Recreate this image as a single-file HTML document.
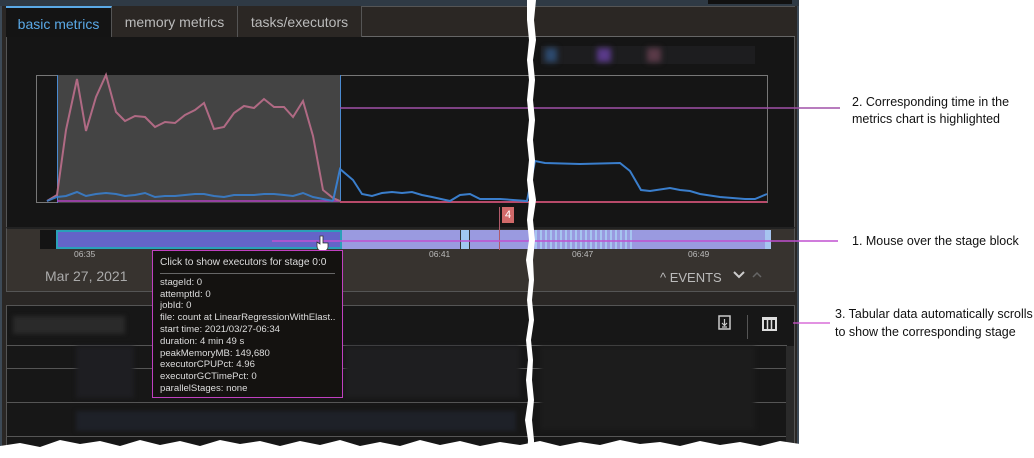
<!DOCTYPE html>
<html><head><meta charset="utf-8"><style>
*{margin:0;padding:0;box-sizing:border-box}
body{width:1034px;height:458px;background:#fff;position:relative;overflow:hidden;font-family:"Liberation Sans",Arial,sans-serif}
.a{position:absolute}
.tab{position:absolute;top:6px;height:31px;font-size:14px;color:#bbb;padding-top:8px;text-align:center;border-right:1px solid #555;background:#2b2724}
.tt{font-size:9.6px;color:#ddd;line-height:11.8px;white-space:nowrap;overflow:hidden}
.ann{font-size:12.5px;color:#111;line-height:17px}
</style></head><body>
<div class="a" style="left:0;top:0;width:799px;height:458px;background:#2a2725;border-left:2px solid #3d4a57;border-right:2px solid #3d4a57"></div>
<div class="a" style="left:0;top:0;width:799px;height:6px;background:#2f3a45"></div>
<div class="a" style="left:708px;top:0;width:84px;height:4px;background:#111"></div>
<div class="a" style="left:6px;top:6px;width:789px;height:31px;background:#2b2724;border-bottom:1px solid #666;border-top:1px solid #555"></div>
<div class="tab" style="left:6px;width:106px;background:#141414;color:#5aa9e6;border-top:2px solid #5aa9e6;border-bottom:1px solid #141414;height:32px">basic metrics</div>
<div class="tab" style="left:112px;width:126px">memory metrics</div>
<div class="tab" style="left:238px;width:124px">tasks/executors</div>
<div class="a" style="left:6px;top:37px;width:789px;height:190px;background:#151515;border-left:1px solid #555;border-right:1px solid #555"></div>
<div class="a" style="left:541px;top:46px;width:214px;height:18px;background:#1d1d1f"></div>
<div class="a" style="left:545px;top:48px;width:12px;height:14px;background:#2d4a6e;filter:blur(3px)"></div>
<div class="a" style="left:597px;top:48px;width:14px;height:14px;background:#5a3a8a;filter:blur(3px)"></div>
<div class="a" style="left:647px;top:48px;width:14px;height:14px;background:#5a3a48;filter:blur(3px)"></div>
<div class="a" style="left:36px;top:75px;width:732px;height:128px;border:1px solid #777"></div>
<div class="a" style="left:57px;top:75px;width:284px;height:128px;background:#444;border-left:1px solid #4a8ad0;border-right:1px solid #4a8ad0"></div>
<div class="a" style="left:6px;top:227px;width:789px;height:65px;background:#37332f;border:1px solid #555;border-top:2px solid #222"></div>
<div class="a" style="left:40px;top:230px;width:16px;height:19px;background:#141414"></div>
<div class="a" style="left:342px;top:230px;width:428px;height:19px;background:#9a9ae0"></div>
<div class="a" style="left:460px;top:230px;width:10px;height:19px;background:#a0c8f0;border-left:1px solid #333;border-right:1px solid #333"></div>
<div class="a" style="left:535px;top:230px;width:100px;height:19px;background:repeating-linear-gradient(90deg,#a6c4f0 0 2px,#9a9ae0 2px 5px)"></div>
<div class="a" style="left:765px;top:230px;width:6px;height:19px;background:#a6c4f0"></div>
<div class="a" style="left:56px;top:230px;width:286px;height:19px;background:#6464c8;border:2px solid #2aa0b8"></div>
<div class="a" style="left:502px;top:207px;width:12px;height:16px;background:#d06a6a;color:#fff;font-size:11px;text-align:center;line-height:16px">4</div>
<div class="a" style="left:499px;top:207px;width:1px;height:43px;background:#b05a6a"></div>
<div class="a" style="left:74px;top:249px;font-size:8.5px;color:#bbb">06:35</div>
<div class="a" style="left:429px;top:249px;font-size:8.5px;color:#bbb">06:41</div>
<div class="a" style="left:572px;top:249px;font-size:8.5px;color:#bbb">06:47</div>
<div class="a" style="left:688px;top:249px;font-size:8.5px;color:#bbb">06:49</div>
<div class="a" style="left:45px;top:268px;font-size:14px;color:#aaa">Mar 27, 2021</div>
<div class="a" style="left:660px;top:270px;font-size:13px;color:#bbb">^ EVENTS</div>
<svg class="a" style="left:733px;top:270px" width="30" height="10"><path d="M1,2 l5,5 l5,-5" fill="none" stroke="#ccc" stroke-width="2"/><path d="M20,7 l4,-4 l4,4" fill="none" stroke="#666" stroke-width="1.5"/></svg>
<div class="a" style="left:6px;top:305px;width:789px;height:153px;background:#171717;border:1px solid #555"></div>
<div class="a" style="left:13px;top:316px;width:112px;height:18px;background:#2a2a2a;filter:blur(2px)"></div>
<div class="a" style="left:7px;top:345px;width:780px;height:1px;background:#555"></div>
<div class="a" style="left:7px;top:368px;width:780px;height:1px;background:#555"></div>
<div class="a" style="left:7px;top:402px;width:780px;height:1px;background:#555"></div>
<div class="a" style="left:7px;top:436px;width:780px;height:1px;background:#555"></div>
<div class="a" style="left:786px;top:346px;width:8px;height:112px;background:#2a2a2a"></div>
<div class="a" style="left:76px;top:346px;width:58px;height:52px;background:#1e1e22;filter:blur(2px)"></div>
<div class="a" style="left:76px;top:411px;width:440px;height:20px;background:#1e2128;filter:blur(2px)"></div>
<div class="a" style="left:345px;top:346px;width:175px;height:52px;background:#1e1e20;filter:blur(2px)"></div>
<div class="a" style="left:540px;top:346px;width:215px;height:84px;background:#1c1c1c;filter:blur(2px)"></div>
<svg class="a" style="left:718px;top:315px" width="60" height="18"><rect x="1" y="1" width="11" height="13" fill="none" stroke="#ccc" stroke-width="1.5"/><path d="M6.5,4 v6 M4,8 l2.5,2.5 l2.5,-2.5 M4,12 h5" stroke="#ccc" fill="none" stroke-width="1.2"/><rect x="45" y="3" width="13" height="12" fill="none" stroke="#ddd" stroke-width="2"/><path d="M49.5,4 v10 M53.5,4 v10" stroke="#ddd" stroke-width="1.5"/><rect x="45" y="3" width="13" height="2" fill="#ddd"/></svg>
<div class="a" style="left:747px;top:315px;width:1px;height:24px;background:#555"></div>
<svg class="a" style="left:0;top:0" width="1034" height="458">
<polyline fill="none" stroke="#a050a8" stroke-width="1.5" points="340,108 840,108"/>
<polyline fill="none" stroke="#b040c0" stroke-width="1.5" points="57,201 340,201"/>
<polyline fill="none" stroke="#b84a6a" stroke-width="2" points="340,202 767,202"/>
<polyline fill="none" stroke="#b06a84" stroke-width="2" points="47,201 57,195 66,130 77,79 86,131 96,97 106,75 116,112 125,121 135,116 145,117 155,127 165,122 175,123 185,115 195,110 204,103 214,129 224,127 234,113 244,106 254,108 264,99 274,107 284,107 293,117 303,101 313,136 323,190 333,198 340,201"/>
<polyline fill="none" stroke="#3a7ecc" stroke-width="2" opacity="0.9" points="47,201 57,197 66,196 77,192 86,196 96,194 106,193 116,194 125,196 135,195 145,193 155,197 165,196 175,196 185,195 195,194 204,194 214,196 224,197 234,195 244,195 254,195 264,194 274,194 284,195 293,196 303,193 313,197 333,201"/>
<polyline fill="none" stroke="#3a7ecc" stroke-width="2" points="333,201 340,169 353,180 362,194 372,196 382,193 392,192 402,193 412,192 422,195 432,197 450,201 460,195 470,194 480,199 500,199 527,201 535,161 545,163 580,164 620,163 630,171 641,190 650,191 670,188 680,190 690,191 700,194 720,197 745,199 755,199 767,194"/>
<polyline fill="none" stroke="#c050d0" stroke-width="1.5" points="272,241 838,241"/>
<polyline fill="none" stroke="#d050d0" stroke-width="1.2" points="793,323 830,323"/>
<path d="M320,236 v8 l-3,-2 v4 c0,3 2,5 5,5 h2 c2,0 4,-2 4,-4 v-4 h-5 v-7 z" fill="#fff" stroke="#333" stroke-width="0.8"/>
<path fill="#fff" d="M527,0 L536,0 L534,20 L536,40 L533,60 L535,80 L533,100 L535,120 L533,140 L535,160 L533,180 L536,200 L533,220 L535,240 L533,260 L534,280 L532,300 L534,320 L531,340 L533,360 L532,380 L534,400 L532,420 L534,440 L534,458 L527,458 L528,440 L525,420 L528,400 L526,380 L528,360 L526,340 L529,320 L527,300 L529,280 L526,260 L529,240 L527,220 L529,200 L527,180 L529,160 L527,140 L529,120 L527,100 L529,80 L527,60 L529,40 L527,20 Z"/>
<path fill="#fff" d="M0,458 L0,446 L20,443 L40,447 L60,440 L80,444 L100,441 L120,446 L140,440 L160,445 L180,441 L200,446 L220,440 L240,444 L260,441 L280,446 L300,441 L320,445 L340,440 L360,446 L380,442 L400,446 L420,440 L440,445 L460,441 L480,446 L500,442 L520,445 L540,441 L560,446 L580,442 L600,445 L620,440 L640,444 L660,442 L680,446 L700,441 L720,445 L740,442 L760,446 L780,441 L800,444 L800,458 Z"/>
</svg>
<div class="a" style="left:152px;top:250px;width:191px;height:148px;background:#141210;border:1px solid #c040c0;padding:6px 7px">
<div class="tt" style="font-size:10.2px;padding-bottom:4px;border-bottom:1px solid #666;margin-bottom:3px">Click to show executors for stage 0:0</div>
<div class="tt">stageId: 0</div><div class="tt">attemptId: 0</div><div class="tt">jobId: 0</div>
<div class="tt">file: count at LinearRegressionWithElast...</div>
<div class="tt">start time: 2021/03/27-06:34</div><div class="tt">duration: 4 min 49 s</div>
<div class="tt">peakMemoryMB: 149,680</div><div class="tt">executorCPUPct: 4.96</div>
<div class="tt">executorGCTimePct: 0</div><div class="tt">parallelStages: none</div>
</div>
<div class="a ann" style="left:852px;top:94px">2. Corresponding time in the<br>metrics chart is highlighted</div>
<div class="a ann" style="left:852px;top:233px">1. Mouse over the stage block</div>
<div class="a ann" style="left:835px;top:305px;line-height:18px">3. Tabular data automatically scrolls<br>to show the corresponding stage</div>
</body></html>
